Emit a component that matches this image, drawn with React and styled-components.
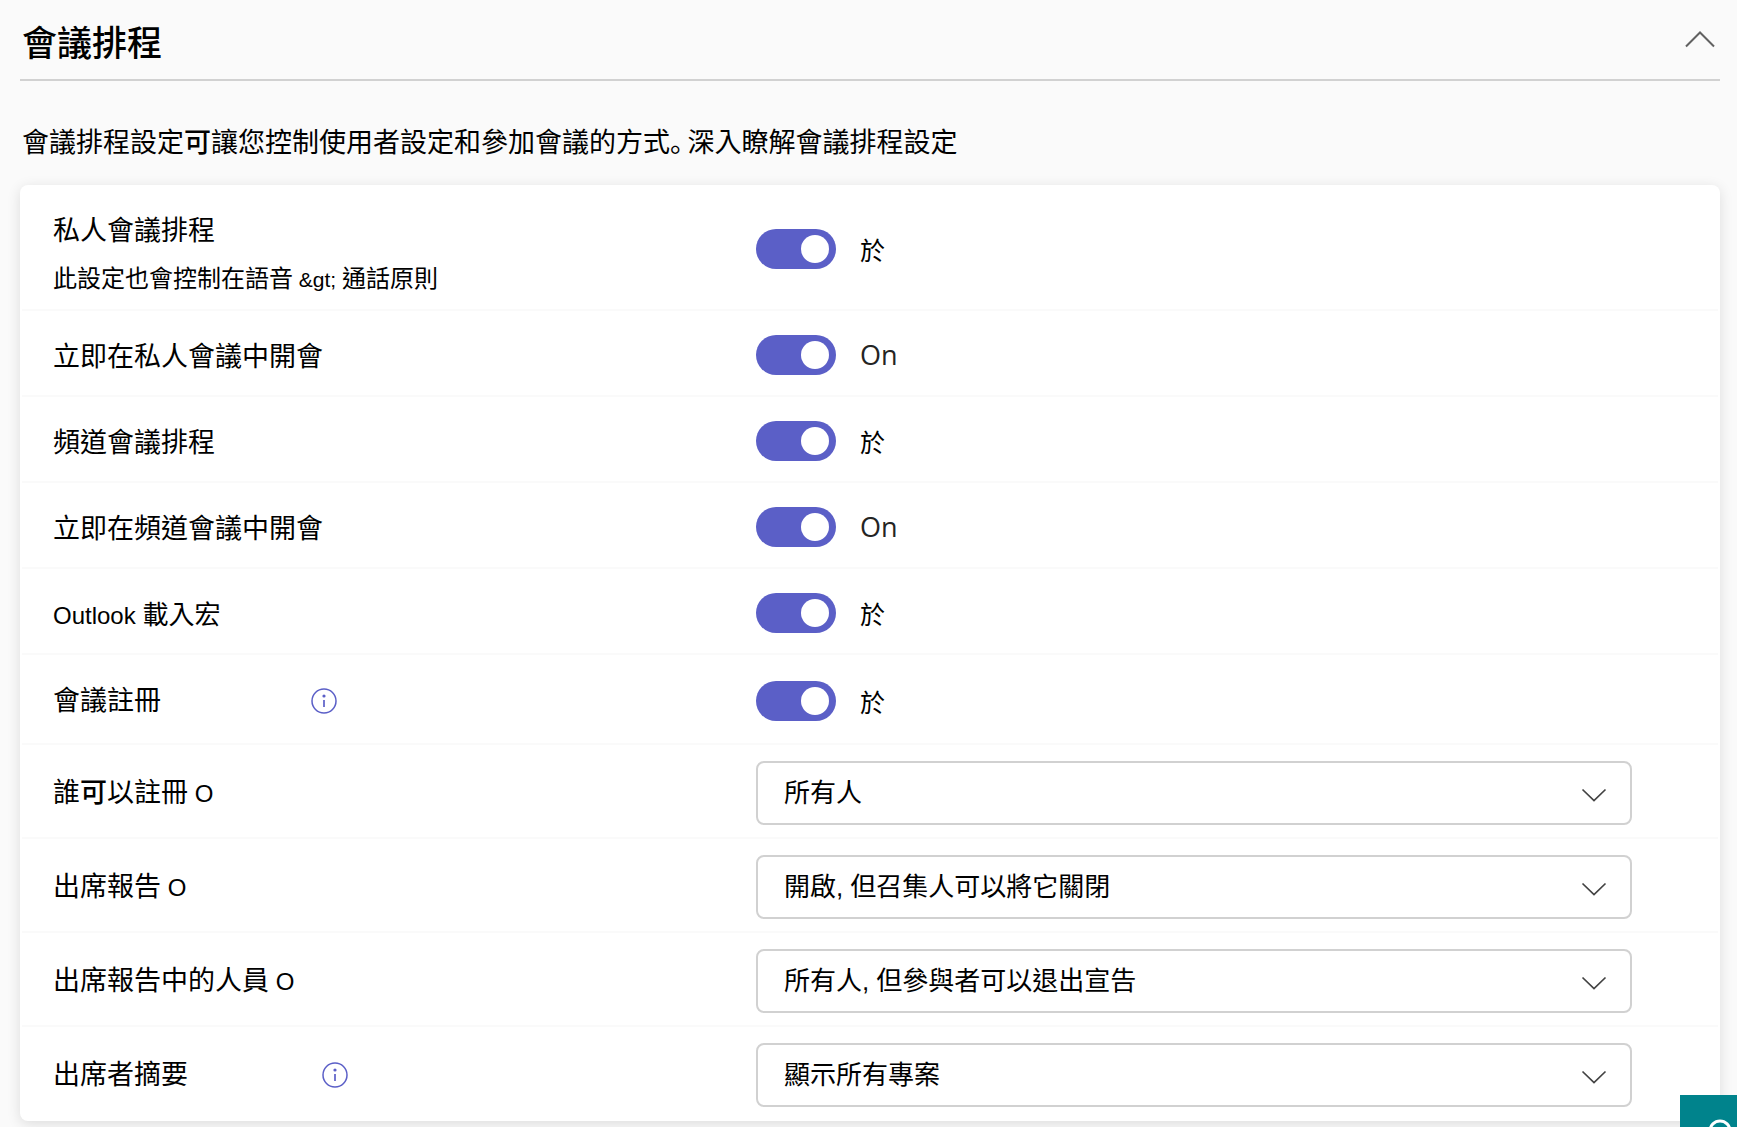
import React, { useState } from "react";
import styled, { createGlobalStyle } from "styled-components";

const toggleRows = [
    {
        id: "private-meeting",
        title: "私人會議排程",
        desc: true,
        state: "於",
        size: "tall",
    },
    { id: "private-meet-now", title: "立即在私人會議中開會", state: "On" },
    { id: "channel-meeting", title: "頻道會議排程", state: "於" },
    { id: "channel-meet-now", title: "立即在頻道會議中開會", state: "On" },
    { id: "outlook", latin: "Outlook ", title: "載入宏", small: true, state: "於" },
    {
        id: "registration",
        title: "會議註冊",
        infoGap: 150,
        state: "於",
        size: "medium",
    },
];

const selectRows = [
    {
        id: "who-register",
        title: (
            <>
                誰<Heavy>可</Heavy>以註冊<Latin> O</Latin>
            </>
        ),
        value: "所有人",
    },
    {
        id: "report",
        title: (
            <>
                出席報告<Latin> O</Latin>
            </>
        ),
        value: "開啟, 但召集人可以將它關閉",
    },
    {
        id: "report-people",
        title: (
            <>
                出席報告中的人員<Latin> O</Latin>
            </>
        ),
        value: "所有人, 但參與者可以退出宣告",
    },
    {
        id: "summary",
        title: "出席者摘要",
        infoGap: 134,
        value: "顯示所有專案",
    },
];

function Heavy({ children }) {
    return <HeavyText>{children}</HeavyText>;
}

function Latin({ children }) {
    return <LatinText>{children}</LatinText>;
}

function Info({ gap }) {
    return (
        <InfoButton type="button" aria-label="資訊" $gap={gap}>
            <svg width="26" height="26" viewBox="0 0 26 26" fill="none">
                <circle cx="13" cy="13" r="12" stroke="#5b5fc7" strokeWidth="1.5" />
                <circle cx="13" cy="8" r="1.6" fill="#5b5fc7" />
                <path d="M13 12v7" stroke="#5b5fc7" strokeWidth="1.7" />
            </svg>
        </InfoButton>
    );
}

function ToggleRow({ row }) {
    const [on, setOn] = useState(true);

    return (
        <Row $size={row.size}>
            <LabelCell $size={row.size}>
                <div>
                    <RowLabel htmlFor={row.id} $small={row.small}>
                        {row.latin && <LatinText>{row.latin}</LatinText>}
                        {row.title}
                    </RowLabel>
                    {row.desc && (
                        <RowDesc>
                            此設定也會控制在語音<SmallLatin> &amp;gt; </SmallLatin>通話原則
                        </RowDesc>
                    )}
                </div>
                {row.infoGap && <Info gap={row.infoGap} />}
            </LabelCell>
            <ToggleCell>
                <Toggle
                    id={row.id}
                    type="checkbox"
                    checked={on}
                    onChange={() => setOn(!on)}
                />
                <ToggleState $latin={row.state === "On"}>{row.state}</ToggleState>
            </ToggleCell>
        </Row>
    );
}

function SelectRow({ row }) {
    return (
        <Row $size="select">
            <LabelCell $size="select">
                <RowLabel htmlFor={row.id}>{row.title}</RowLabel>
                {row.infoGap && <Info gap={row.infoGap} />}
            </LabelCell>
            <SelectBox>
                <Select id={row.id} defaultValue={row.value}>
                    <option>{row.value}</option>
                </Select>
                <SelectArrow width="26" height="14" viewBox="0 0 26 14" fill="none">
                    <path d="M1.5 1.5L13 12.5L24.5 1.5" stroke="#424242" strokeWidth="1.7" />
                </SelectArrow>
            </SelectBox>
        </Row>
    );
}

export default function App() {
    const [open, setOpen] = useState(true);

    return (
        <>
            <GlobalStyle />
            <Page>
                <Header>
                    <Title>會議排程</Title>
                    <CollapseButton
                        type="button"
                        aria-label="會議排程"
                        aria-expanded={open}
                        onClick={() => setOpen(!open)}
                    >
                        <svg width="30" height="17" viewBox="0 0 30 17" fill="none">
                            <path d="M1 15.5L15 1.5L29 15.5" stroke="#616161" strokeWidth="2" />
                        </svg>
                    </CollapseButton>
                </Header>
                {open && (
                    <>
                        <Intro>
                            會議排程設定<Heavy>可</Heavy>讓您控制使用者設定和參加會議的方式
                            <FullStop>。</FullStop>
                            <IntroLink href="#learn">深入瞭解會議排程設定</IntroLink>
                        </Intro>
                        <Card>
                            {toggleRows.map((row) => (
                                <ToggleRow key={row.id} row={row} />
                            ))}
                            {selectRows.map((row) => (
                                <SelectRow key={row.id} row={row} />
                            ))}
                        </Card>
                    </>
                )}
            </Page>
            <HelpButton type="button" aria-label="說明">
                <svg width="57" height="32" viewBox="0 0 57 32" fill="none">
                    <circle cx="40" cy="36" r="10" stroke="#fff" strokeWidth="3" />
                </svg>
            </HelpButton>
        </>
    );
}

const GlobalStyle = createGlobalStyle`
    * {
        box-sizing: border-box;
    }
    body {
        margin: 0;
        background: #fafafa;
        color: #000;
        font-family: "Liberation Sans", "Noto Sans CJK TC", sans-serif;
    }
    button {
        display: flex;
        padding: 0;
        border: 0;
        background: none;
        cursor: pointer;
    }
`;

const Page = styled.main`
    padding: 0 17px 6px 20px;
`;

const Header = styled.header`
    display: flex;
    align-items: center;
    justify-content: space-between;
    height: 81px;
    padding: 0 5px 0 2px;
    border-bottom: 2px solid #d1d1d1;
`;

const Title = styled.h1`
    margin: 8px 0 0;
    font-size: 35px;
    font-weight: 500;
    line-height: 48px;
`;

const CollapseButton = styled.button``;

const Intro = styled.p`
    margin: 0;
    padding: 40px 2px 22px;
    font-size: 27px;
    line-height: 40px;
`;

const IntroLink = styled.a`
    color: inherit;
    text-decoration: none;
`;

const FullStop = styled.span`
    margin-right: 4px;
    font-family: "Noto Sans CJK SC", sans-serif;
    font-feature-settings: "halt";
`;

const HeavyText = styled.span`
    font-weight: 500;
`;

const LatinText = styled.span`
    font-size: 24px;
    white-space: pre;
`;

const SmallLatin = styled.span`
    font-size: 21px;
`;

const Card = styled.section`
    padding: 0 2px;
    border-radius: 8px;
    background: #fff;
    box-shadow: 0 3px 14px rgba(0, 0, 0, 0.12);
`;

const rowHeights = { tall: 126, medium: 90, select: 94 };
const labelOffsets = { tall: 12, medium: 0, select: 0 };

const Row = styled.div`
    display: grid;
    grid-template-columns: minmax(0, 4fr) minmax(0, 5fr);
    column-gap: 2px;
    align-items: center;
    min-height: ${(props) => rowHeights[props.$size] || 86}px;
    padding: 4px 86px 0 31px;
    border-bottom: 2px solid #fafafa;

    &:last-child {
        border-color: transparent;
    }
`;

const LabelCell = styled.div`
    display: flex;
    align-items: center;
    padding-top: ${(props) => labelOffsets[props.$size] ?? 4}px;
`;

const RowLabel = styled.label`
    display: block;
    font-size: ${(props) => (props.$small ? 26 : 27)}px;
    line-height: 48px;
`;

const RowDesc = styled.div`
    font-size: 24px;
    line-height: 48px;
`;

const InfoButton = styled.button`
    margin-left: ${(props) => props.$gap}px;
`;

const ToggleCell = styled.div`
    display: flex;
    align-items: center;
    gap: 24px;
`;

const Toggle = styled.input`
    appearance: none;
    width: 80px;
    height: 40px;
    margin: 0;
    padding: 6px 7px;
    border-radius: 20px;
    background: ${(props) => (props.checked ? "#5b5fc7" : "#8a8a8a")};
    cursor: pointer;

    &::before {
        content: "";
        display: block;
        width: 28px;
        height: 28px;
        margin-left: ${(props) => (props.checked ? "auto" : "0")};
        border-radius: 50%;
        background: #fff;
    }
`;

const ToggleState = styled.span`
    color: ${(props) => (props.$latin ? "#242424" : "#000")};
    font-family: ${(props) =>
        props.$latin ? '"Open Sans", sans-serif' : '"Noto Sans CJK TC", sans-serif'};
    font-size: ${(props) => (props.$latin ? 27 : 25)}px;
    line-height: 40px;
`;

const SelectBox = styled.div`
    position: relative;
`;

const Select = styled.select`
    appearance: none;
    display: block;
    width: 100%;
    height: 64px;
    padding: 0 72px 0 26px;
    border: 2px solid #d1d1d1;
    border-radius: 8px;
    background: #fff;
    color: #000;
    font-family: inherit;
    font-size: 26px;
`;

const SelectArrow = styled.svg`
    position: absolute;
    top: 27px;
    right: 25px;
    pointer-events: none;
`;

const HelpButton = styled.button`
    position: fixed;
    right: 0;
    bottom: 0;
    background: #00838c;
`;
